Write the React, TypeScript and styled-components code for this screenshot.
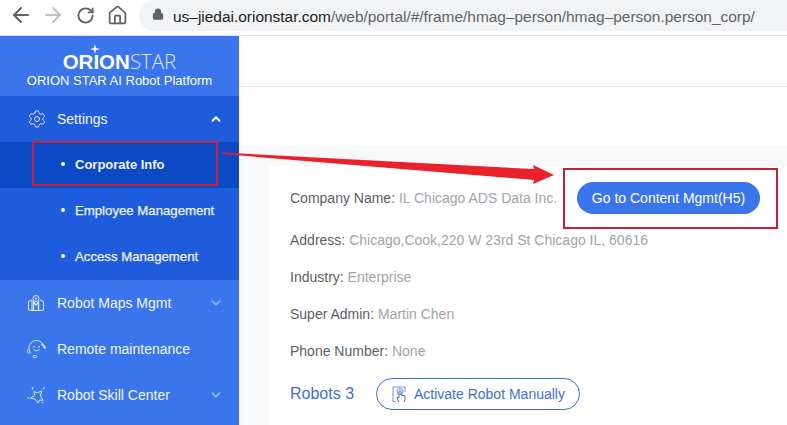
import React from 'react';
import styled, { createGlobalStyle } from 'styled-components';
import { ArrowLeft, ArrowRight, RotateCw, Home, Lock, Settings, ChevronUp, ChevronDown } from 'lucide-react';

const GlobalStyle = createGlobalStyle`
  html, body { margin: 0; padding: 0; background: #fff; }
  body { width: 787px; height: 425px; overflow: hidden; font-family: "Liberation Sans", Arial, sans-serif; }
  * { box-sizing: border-box; }
`;

const Page = styled.div`
  position: relative;
  width: 787px;
  height: 425px;
  overflow: hidden;
  display: flex;
  flex-direction: column;
`;

/* browser chrome */
const BrowserBar = styled.div`
  height: 36px;
  flex: none;
  display: flex;
  align-items: flex-start;
  padding-left: 9px;
  background: #fff;
  border-bottom: 1px solid #dcdcdc;
`;

const NavButton = styled.span<{ $color: string }>`
  display: flex;
  justify-content: center;
  align-items: center;
  width: 24px;
  height: 24px;
  margin: 3px 8px 0 0;
  color: ${p => p.$color};
`;

const UrlPill = styled.div`
  margin-left: 2px;
  flex: 1;
  height: 31px;
  background: #f1f3f4;
  border-radius: 0 0 0 16px;
  border-top-left-radius: 16px;
  display: flex;
  align-items: center;
  padding: 2px 0 0 13px;
  font-size: 15.45px;
  color: #5f6368;
  white-space: nowrap;
`;

const LockIcon = styled.span`
  display: flex;
  margin: -5px 9px 0 0;
  color: #5f6368;
`;

const Host = styled.span`
  color: #202124;
`;

const Body = styled.div`
  flex: 1;
  display: flex;
  min-height: 0;
`;

/* sidebar */
const Sidebar = styled.aside`
  width: 239px;
  flex: none;
  background: #3a75ec;
  color: #fff;
`;

const Brand = styled.div`
  height: 60px;
  display: flex;
  flex-direction: column;
  align-items: center;
  padding-top: 15px;
`;

const LogoRow = styled.div`
  position: relative;
  font-size: 20.5px;
  line-height: 20px;
  white-space: nowrap;
`;

const LogoBold = styled.span`
  font-weight: 700;
`;

const LogoThin = styled.span`
  font-family: "Open Sans", sans-serif;
  font-weight: 300;
  color: #dbe6fc;
`;

const LogoStar = styled.svg`
  position: absolute;
  left: 27px;
  top: -7px;
`;

const BrandLine = styled.div`
  margin-top: 1px;
  font-size: 13px;
  line-height: 16px;
  white-space: nowrap;
`;

const MenuRow = styled.div<{ $open?: boolean }>`
  height: 46px;
  display: flex;
  align-items: center;
  padding-left: 27px;
  font-size: 14px;
  color: #f2f6ff;
  background: ${p => (p.$open ? '#1e5cdc' : 'transparent')};
`;

const MenuIcon = styled.span`
  width: 30px;
  display: flex;
  flex: none;
`;

const MenuLabel = styled.span`
  flex: 1;
`;

const Caret = styled.span<{ $bright?: boolean }>`
  display: flex;
  width: 14px;
  margin-right: 16px;
  color: ${p => (p.$bright ? '#fff' : '#8fb0f5')};
`;

const SubList = styled.div`
  background: #1e5cdc;
`;

const SubRow = styled.div<{ $active?: boolean }>`
  height: 46px;
  display: flex;
  align-items: center;
  padding: 0 0 2px 61px;
  font-size: ${p => (p.$active ? '13px' : '13.2px')};
  font-weight: ${p => (p.$active ? 700 : 400)};
  -webkit-text-stroke: ${p => (p.$active ? '0' : '0.25px')};
  color: #eef3ff;
  background: ${p => (p.$active ? '#0c49c4' : 'transparent')};
  &::before {
    content: '';
    width: 4px;
    height: 4px;
    border-radius: 50%;
    background: #fff;
    margin-right: 10px;
  }
`;

/* main */
const Main = styled.main`
  flex: 1;
  display: flex;
  flex-direction: column;
  min-width: 0;
  background: #f7f8f9;
`;

const TopStrip = styled.div`
  height: 51px;
  flex: none;
  background: #fff;
  border-bottom: 1px solid #e6e8eb;
`;

const TitleStrip = styled.div`
  height: 59px;
  flex: none;
  background: #fff;
`;

const Card = styled.section`
  flex: 1;
  margin: 20px 0 0 30px;
  background: #fff;
  padding: 20px 0 0 21px;
`;

const CompanyLine = styled.div`
  display: flex;
  align-items: center;
  height: 24px;
  margin-bottom: 18px;
`;

const InfoLine = styled.div`
  font-size: 14px;
  line-height: 24px;
  height: 24px;
  margin-bottom: 13px;
  color: #5c5f66;
  white-space: nowrap;
`;

const CompanyText = styled(InfoLine)`
  margin-bottom: 0;
  width: 287px;
`;

const Muted = styled.span`
  color: #a1a4a9;
`;

const PrimaryButton = styled.div`
  width: 183px;
  height: 32px;
  flex: none;
  border-radius: 16px;
  background: #3a75ec;
  color: #fff;
  font-size: 14px;
  display: flex;
  align-items: center;
  justify-content: center;
  white-space: nowrap;
`;

const RobotsLine = styled.div`
  display: flex;
  align-items: center;
  margin-top: 15px;
`;

const RobotsTitle = styled.div`
  font-size: 16px;
  color: #4470d0;
  width: 86px;
  white-space: nowrap;
`;

const OutlineButton = styled.div`
  width: 204px;
  height: 32px;
  border: 1px solid #4470d0;
  border-radius: 16px;
  color: #4470d0;
  font-size: 14px;
  display: flex;
  align-items: center;
  padding-left: 15px;
  gap: 6px;
  white-space: nowrap;
`;

/* annotations painted over the screenshot */
const Overlay = styled.svg`
  position: absolute;
  left: 0;
  top: 0;
  pointer-events: none;
`;

const MapsIcon = () => (
  <svg width="18" height="18" viewBox="0 0 18 18" fill="none" stroke="#dce7ff" strokeWidth="1">
    <path d="M1.500 7.500 L5 6 V16.500 L1.500 16 Z" />
    <path d="M13 6 L16.500 7.500 V16 L13 16.500" />
    <circle cx="9" cy="4.500" r="3" />
    <circle cx="9" cy="4.500" r="0.800" />
    <path d="M6.500 16 V8 L9 11 L11.500 8 V16" strokeWidth="1.400" />
    <path d="M5 16.500 H13" />
  </svg>
);

const SupportIcon = () => (
  <svg width="19" height="19" viewBox="0 0 19 19" fill="none" stroke="#dce7ff" strokeWidth="1">
    <path d="M3.500 12.500 A7.500 7.500 0 1 1 17 8" />
    <path d="M1.500 9 A2 2 0 0 0 3.500 13" />
    <path d="M14.500 4.500 C17 5 18 7 18 9" strokeWidth="1.500" />
    <path d="M6.500 9.500 Q9.500 12.500 12.500 9.500" />
    <circle cx="7" cy="6.800" r="0.500" />
    <circle cx="12" cy="6.800" r="0.500" />
    <rect x="6" y="15.500" width="3.500" height="2" rx="1" />
  </svg>
);

const SkillIcon = () => (
  <svg width="19" height="19" viewBox="0 0 19 19" fill="none" stroke="#dce7ff" strokeWidth="1">
    <path d="M7 5.500 L10 7 L14.500 5 L13.500 10 L16 14.500 L12.500 14 L11 17 L8 13 L3.500 12 L7.500 9.500 Z" />
    <path d="M5 1 L6 3.500 M17.500 1 L16 3.500 M0 12 H2.500 M16 17.500 L15 16" />
  </svg>
);

const TapIcon = () => (
  <svg width="16" height="17" viewBox="0 0 16 17" fill="none" stroke="#6f93dd" strokeWidth="1">
    <path d="M3.500 15.500 H1 V1 H13 V6" />
    <circle cx="8" cy="5.500" r="3" />
    <path d="M6.500 16 L5 11.500 L7 11.500 V5.500 A1 1 0 0 1 9 5.500 V9 L13 10 V13.500 L12 16" stroke="#4470d0" />
  </svg>
);

const App: React.FC = () => (
  <Page>
    <GlobalStyle />
    <BrowserBar>
      <NavButton $color="#5f6368"><ArrowLeft size={24} strokeWidth={2} /></NavButton>
      <NavButton $color="#bdc1c6"><ArrowRight size={24} strokeWidth={2} /></NavButton>
      <NavButton $color="#5f6368"><RotateCw size={19} strokeWidth={2.4} /></NavButton>
      <NavButton $color="#5f6368"><Home size={21} strokeWidth={2} /></NavButton>
      <UrlPill>
        <LockIcon><Lock size={12} strokeWidth={2.5} fill="#5f6368" /></LockIcon>
        <Host>us–jiedai.orionstar.com</Host>/web/portal/#/frame/hmag–person/hmag–person.person_corp/
      </UrlPill>
    </BrowserBar>
    <Body>
      <Sidebar>
        <Brand>
          <LogoRow>
            <LogoStar width="10" height="10" viewBox="0 0 10 10">
              <path d="M5 0 L6 4 L10 5 L6 6 L5 10 L4 6 L0 5 L4 4 Z" fill="#fff" />
            </LogoStar>
            <LogoBold>ORION</LogoBold><LogoThin>STAR</LogoThin>
          </LogoRow>
          <BrandLine>ORION STAR AI Robot Platform</BrandLine>
        </Brand>
        <MenuRow $open>
          <MenuIcon><Settings size={20} strokeWidth={1.1} color="#e6eeff" /></MenuIcon>
          <MenuLabel>Settings</MenuLabel>
          <Caret $bright><ChevronUp size={14} strokeWidth={3.2} /></Caret>
        </MenuRow>
        <SubList>
          <SubRow $active>Corporate Info</SubRow>
          <SubRow>Employee Management</SubRow>
          <SubRow>Access Management</SubRow>
        </SubList>
        <MenuRow>
          <MenuIcon><MapsIcon /></MenuIcon>
          <MenuLabel>Robot Maps Mgmt</MenuLabel>
          <Caret><ChevronDown size={14} strokeWidth={3.2} /></Caret>
        </MenuRow>
        <MenuRow>
          <MenuIcon><SupportIcon /></MenuIcon>
          <MenuLabel>Remote maintenance</MenuLabel>
        </MenuRow>
        <MenuRow>
          <MenuIcon><SkillIcon /></MenuIcon>
          <MenuLabel>Robot Skill Center</MenuLabel>
          <Caret><ChevronDown size={14} strokeWidth={3.2} /></Caret>
        </MenuRow>
      </Sidebar>
      <Main>
        <TopStrip />
        <TitleStrip />
        <Card>
          <CompanyLine>
            <CompanyText>Company Name: <Muted>IL Chicago ADS Data Inc.</Muted></CompanyText>
            <PrimaryButton>Go to Content Mgmt(H5)</PrimaryButton>
          </CompanyLine>
          <InfoLine>Address: <Muted>Chicago,Cook,220 W 23rd St Chicago IL, 60616</Muted></InfoLine>
          <InfoLine>Industry: <Muted>Enterprise</Muted></InfoLine>
          <InfoLine>Super Admin: <Muted>Martin Chen</Muted></InfoLine>
          <InfoLine>Phone Number: <Muted>None</Muted></InfoLine>
          <RobotsLine>
            <RobotsTitle>Robots 3</RobotsTitle>
            <OutlineButton><TapIcon />Activate Robot Manually</OutlineButton>
          </RobotsLine>
        </Card>
      </Main>
    </Body>
    <Overlay width="787" height="425" viewBox="0 0 787 425">
      <rect x="33" y="142" width="184" height="43" fill="none" stroke="#c9243f" strokeWidth="2" />
      <rect x="564" y="169" width="213" height="59" fill="none" stroke="#c4202f" strokeWidth="2" />
      <path d="M222 152.500 L534 169 L533 165 L554 175 L533 184 L534 180 L222 154 Z" fill="#e8212b" />
    </Overlay>
  </Page>
);

export default App;
